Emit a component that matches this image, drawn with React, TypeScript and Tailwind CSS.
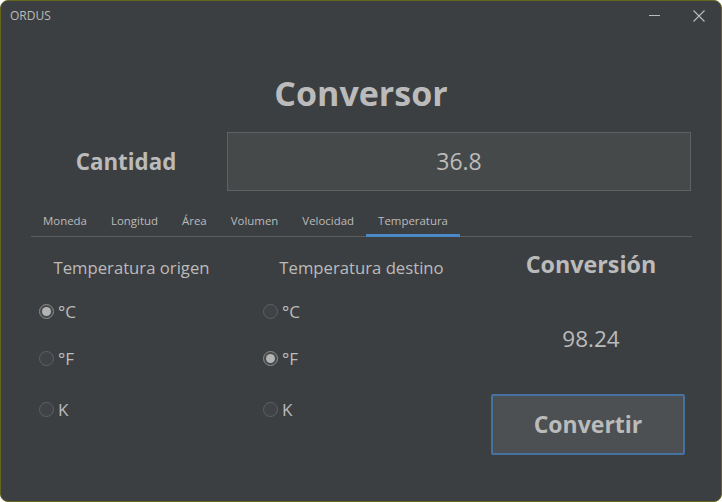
import React from "react";

const font = { fontFamily: '"Open Sans", "Noto Sans", sans-serif' };

function Radio({ checked, label }: { checked?: boolean; label: string }) {
  return (
    <div className="flex items-center h-[20px]">
      {checked ? (
        <div className="w-[15px] h-[15px] rounded-full border border-[#8c8c8c] bg-[#45494a] flex items-center justify-center">
          <div className="w-[9px] h-[9px] rounded-full bg-[#b4b4b4]" />
        </div>
      ) : (
        <div className="w-[15px] h-[15px] rounded-full border border-[#5e6163] bg-[#3f4345]" />
      )}
      <span className="ml-[4px] text-[17px] text-[#bbbbbb] leading-none">{label}</span>
    </div>
  );
}

export default function App() {
  const tabs = ["Moneda", "Longitud", "Área", "Volumen", "Velocidad", "Temperatura"];
  return (
    <div className="w-[722px] h-[502px] bg-[#3c3f41] border border-[#66651c] rounded-[8px] overflow-hidden flex flex-col text-[#bbbbbb]" style={font}>
      {/* title bar */}
      <div className="h-[31px] flex items-center justify-between pl-[9px] pr-[16px]">
        <span className="text-[12px] text-[#bbbbbb] mt-[-1px]">ORDUS</span>
        <div className="flex items-center gap-[33px] mt-[-2px]">
          <div className="w-[11px] h-[1px] bg-[#bbbbbb]" />
          <svg width="12" height="12" viewBox="0 0 12 12">
            <path d="M0.5 0.5 L11.5 11.5 M11.5 0.5 L0.5 11.5" stroke="#bbbbbb" strokeWidth="1.1" />
          </svg>
        </div>
      </div>
      {/* title */}
      <div className="flex justify-center mt-[39px] h-[44px] items-center">
        <span className="text-[34px] font-bold leading-none text-[#bbbbbb]">Conversor</span>
      </div>
      {/* cantidad row */}
      <div className="flex items-center mt-[17px] pl-[30px]">
        <div className="w-[190px] flex justify-center">
          <span className="text-[22.3px] font-bold text-[#bbbbbb]">Cantidad</span>
        </div>
        <div className="ml-[6px] w-[464px] h-[59px] bg-[#45494a] border border-[#5f6263] flex items-center justify-center">
          <span className="text-[23px] text-[#bbbbbb]">36.8</span>
        </div>
      </div>
      {/* tabs */}
      <div className="mx-[30px] mt-[17px] border-b border-[#5b5e60] flex h-[29px] w-[661px]">
        {tabs.map((t) => (
          <div
            key={t}
            className={
              "px-[12px] flex items-center justify-center text-[11.45px] text-[#bbbbbb] border-b-[3px] mb-[-1px] " +
              (t === "Temperatura" ? "border-[#4a88c7]" : "border-transparent")
            }
          >
            {t}
          </div>
        ))}
      </div>
      {/* columns */}
      <div className="flex mt-[19px] pl-[30px]">
        <div className="w-[230px] flex flex-col">
          <div className="w-[201px] flex justify-center text-[16.7px] h-[24px] items-center">Temperatura origen</div>
          <div className="flex flex-col pl-[8px] mt-[21px] gap-[27px]">
            <Radio checked label="°C" />
            <Radio label="°F" />
            <div className="mt-[4px]"><Radio label="K" /></div>
          </div>
        </div>
        <div className="w-[230px] flex flex-col">
          <div className="w-[201px] flex justify-center text-[16.7px] h-[24px] items-center">Temperatura destino</div>
          <div className="flex flex-col pl-[2px] mt-[21px] gap-[27px]">
            <Radio label="°C" />
            <Radio checked label="°F" />
            <div className="mt-[4px]"><Radio label="K" /></div>
          </div>
        </div>
        <div className="w-[200px] flex flex-col items-center">
          <div className="h-[24px] flex items-center mt-[-4px] text-[23.3px] font-bold">Conversión</div>
          <div className="mt-[51px] text-[22.5px] h-[24px] flex items-center">98.24</div>
          <div className="mt-[43px] w-[194px] h-[61px] shrink-0 bg-[#4c5052] border-[2px] border-[#4572a1] rounded-[2px] flex items-center justify-center ml-[-6px]">
            <span className="text-[23px] font-bold">Convertir</span>
          </div>
        </div>
      </div>
    </div>
  );
}
